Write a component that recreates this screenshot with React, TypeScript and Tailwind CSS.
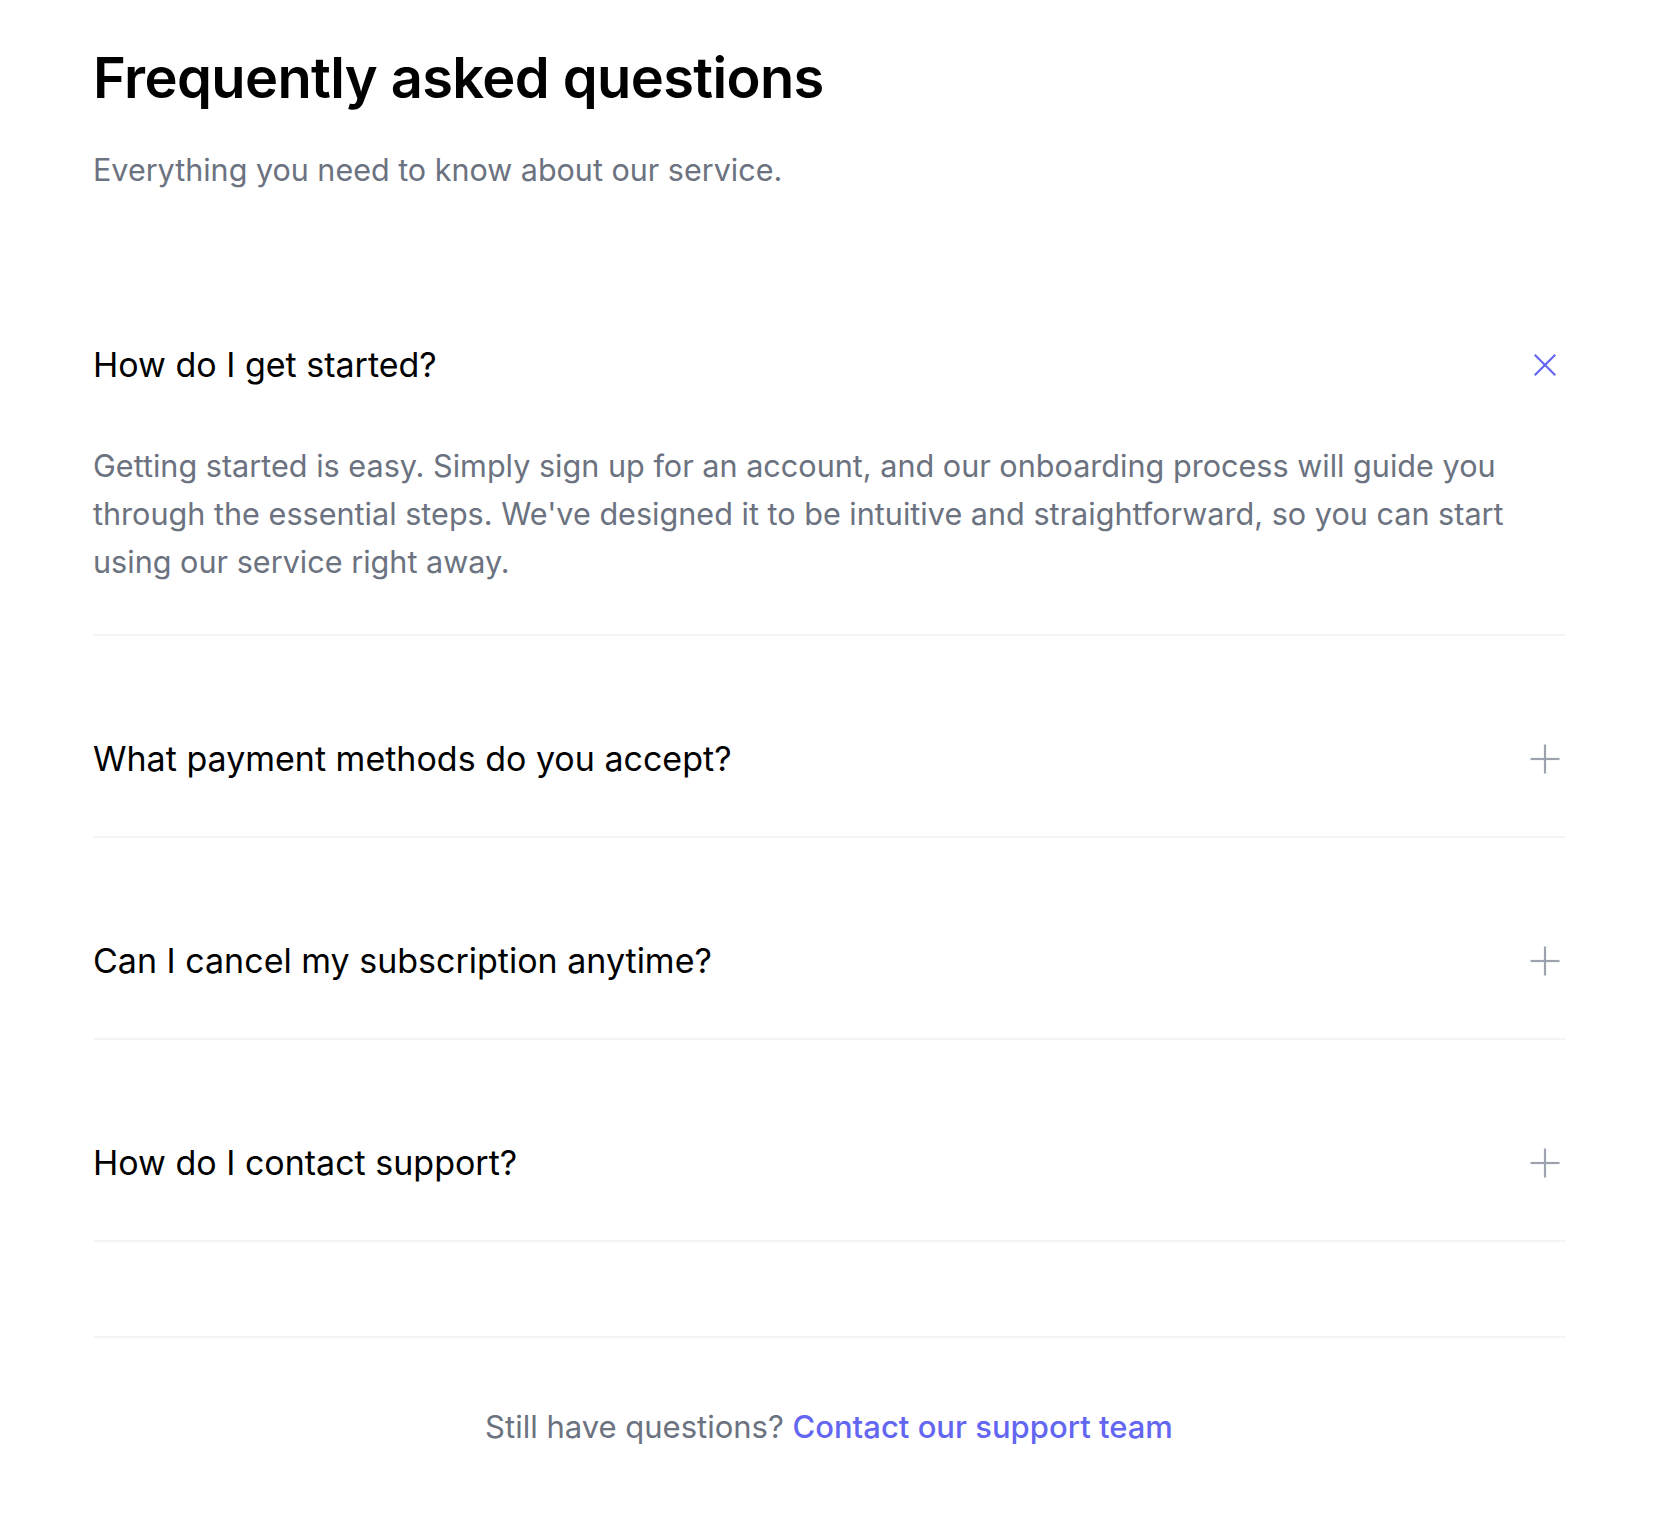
import React, { useState } from "react";

const faqs = [
  {
    q: "How do I get started?",
    a: "Getting started is easy. Simply sign up for an account, and our onboarding process will guide you through the essential steps. We've designed it to be intuitive and straightforward, so you can start using our service right away.",
  },
  {
    q: "What payment methods do you accept?",
    a: "We accept all major credit cards, PayPal, and bank transfers. All payments are processed securely.",
  },
  {
    q: "Can I cancel my subscription anytime?",
    a: "Yes, you can cancel your subscription at any time from your account settings. There are no cancellation fees.",
  },
  {
    q: "How do I contact support?",
    a: "You can reach our support team via email or live chat. We typically respond within 24 hours.",
  },
];

function PlusIcon({ open }: { open: boolean }) {
  return (
    <span
      className={
        "flex h-[40px] w-[40px] shrink-0 items-center justify-center transition-transform " +
        (open ? "rotate-45 text-[#6366f1]" : "rotate-0 text-[#9ca3af]")
      }
    >
      <svg width="30" height="30" viewBox="0 0 30 30" fill="none" stroke="currentColor" strokeWidth="2.2">
        <line x1="15" y1="0.5" x2="15" y2="29.5" />
        <line x1="0.5" y1="15" x2="29.5" y2="15" />
      </svg>
    </span>
  );
}

export default function App() {
  const [open, setOpen] = useState<number>(0);
  return (
    <div
      className="min-h-[1534px] bg-white text-black"
      style={{ fontFamily: "Inter, 'Noto Sans', Arial, sans-serif" }}
    >
      <div className="ml-[93px] w-[1472px] pt-[47px]">
        <h1 className="text-[56px] font-semibold leading-[62px] tracking-[-0.011em] text-black">
          Frequently asked questions
        </h1>
        <p className="mt-[40px] text-[30.5px] leading-[42px] text-[#6b7280]">
          Everything you need to know about our service.
        </p>

        <div className="mt-[97px] flex flex-col gap-[46px]">
          {faqs.map((f, i) => {
            const isOpen = open === i;
            return (
              <div key={i} className="border-b-2 border-[#f3f4f6]">
                <button
                  type="button"
                  onClick={() => setOpen(isOpen ? -1 : i)}
                  className="flex w-full items-center justify-between py-[53px] text-left"
                >
                  <span className="text-[34px] font-normal leading-[48px] text-black">{f.q}</span>
                  <PlusIcon open={isOpen} />
                </button>
                {isOpen && (
                  <div className="pb-[48px] pr-[40px]">
                    <p className="text-[30.6px] leading-[48px] text-[#6b7280]">{f.a}</p>
                  </div>
                )}
              </div>
            );
          })}
        </div>

        <div className="mt-[94px] border-t-2 border-[#f3f4f6] pt-[68px] text-center">
          <p className="text-[31px] leading-[42px] text-[#6b7280]">
            Still have questions?{" "}
            <a href="#" className="font-medium text-[#6366f1]">
              Contact our support team
            </a>
          </p>
        </div>
      </div>
    </div>
  );
}
